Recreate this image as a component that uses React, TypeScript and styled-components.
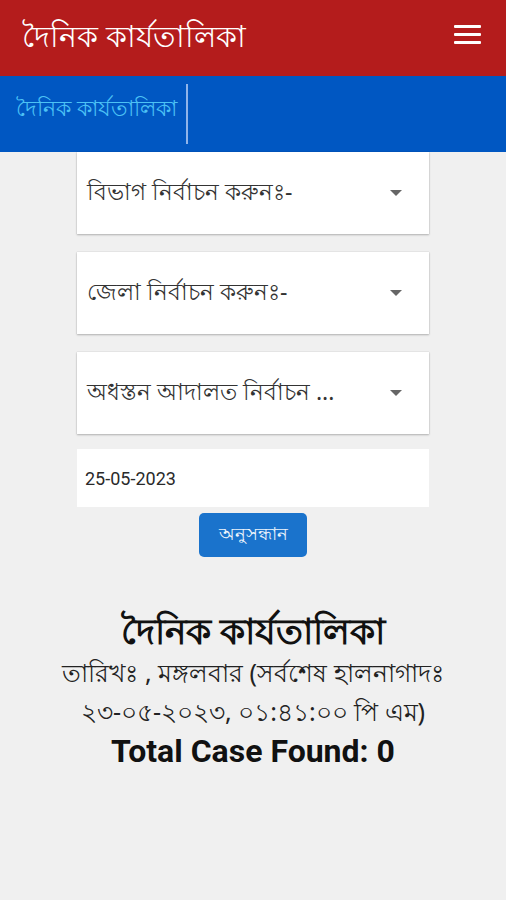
import React from 'react';
import styled, { createGlobalStyle } from 'styled-components';

const GlobalStyle = createGlobalStyle`
    html, body {
        margin: 0;
        padding: 0;
        background: #f0f0f0;
    }
    body {
        font-family: 'Noto Sans', Roboto, 'Liberation Sans', sans-serif;
    }
`;

const Page = styled.div`
    display: flex;
    flex-direction: column;
    min-height: 900px;
    background: #f0f0f0;
`;

const TopBar = styled.header`
    align-items: center;
    background: #b41c1c;
    box-sizing: border-box;
    display: flex;
    height: 76px;
    justify-content: space-between;
    padding: 0 25px 0 22px;
`;

const AppTitle = styled.h1`
    color: #ffffff;
    font-size: 30px;
    font-weight: 500;
    margin: 0;
`;

const MenuButton = styled.button`
    background: none;
    border: 0;
    cursor: pointer;
    display: flex;
    flex-direction: column;
    gap: 5px;
    padding: 0;
    margin-bottom: 8px;

    span {
        background: #ffffff;
        border-radius: 1px;
        display: block;
        height: 3px;
        width: 27px;
    }
`;

const TabBar = styled.nav`
    align-items: center;
    background: #0057c2;
    box-sizing: border-box;
    display: flex;
    height: 76px;
    padding: 0 0 0 16px;
`;

const TabItem = styled.div`
    border-right: 2px solid #8fb4ea;
    box-sizing: border-box;
    color: #4cc2f5;
    font-size: 22px;
    font-weight: 500;
    height: 60px;
    line-height: 46px;
    padding-right: 9px;
`;

const Form = styled.section`
    align-items: center;
    display: flex;
    flex-direction: column;
    gap: 18px;
`;

const Fields = styled.div`
    display: flex;
    flex-direction: column;
    gap: 18px;
    width: 352px;
`;

const SelectCard = styled.div`
    align-items: center;
    background: #ffffff;
    box-shadow: 0 1px 2px rgba(0, 0, 0, 0.25), 0 0 1px rgba(0, 0, 0, 0.2);
    box-sizing: border-box;
    color: #333333;
    display: flex;
    font-size: 23px;
    height: 82px;
    justify-content: space-between;
    padding: 0 27px 0 10px;
`;

const Caret = styled.span`
    border-left: 6px solid transparent;
    border-right: 6px solid transparent;
    border-top: 6px solid #666666;
    height: 0;
    width: 0;
`;

const DateBox = styled.div`
    align-items: center;
    background: #ffffff;
    box-sizing: border-box;
    color: #2a2a2a;
    display: flex;
    font-family: Roboto, 'Liberation Sans', sans-serif;
    font-size: 18px;
    font-weight: 400;
    height: 58px;
    margin-top: -3px;
    padding: 0 8px;
`;

const SearchButton = styled.button`
    background: #1a73cc;
    border: 0;
    border-radius: 5px;
    color: #eef5fc;
    cursor: pointer;
    font-family: 'Noto Sans', sans-serif;
    font-size: 18px;
    font-weight: 500;
    height: 44px;
    margin-top: -12px;
    padding: 0;
    width: 108px;
`;

const Summary = styled.section`
    align-items: center;
    color: #111111;
    display: flex;
    flex-direction: column;
    margin-top: 52px;
    text-align: center;
`;

const SummaryTitle = styled.h2`
    font-size: 36px;
    font-weight: 700;
    line-height: 44px;
    margin: 0;
`;

const SummaryLine = styled.p`
    color: #222222;
    font-size: 25px;
    line-height: 39px;
    margin: 0;
`;

const CaseCount = styled.p`
    font-family: Roboto, 'Liberation Sans', sans-serif;
    font-size: 32px;
    font-weight: 700;
    line-height: 40px;
    margin: 0;
`;

const selects = ['বিভাগ নির্বাচন করুনঃ-', 'জেলা নির্বাচন করুনঃ-', 'অধস্তন আদালত নির্বাচন ...'];

export default function App() {
    return (
        <Page>
            <GlobalStyle />
            <TopBar>
                <AppTitle>দৈনিক কার্যতালিকা</AppTitle>
                <MenuButton aria-label="menu">
                    <span />
                    <span />
                    <span />
                </MenuButton>
            </TopBar>
            <TabBar>
                <TabItem>দৈনিক কার্যতালিকা</TabItem>
            </TabBar>
            <Form>
                <Fields>
                    {selects.map(label => (
                        <SelectCard key={label}>
                            <span>{label}</span>
                            <Caret />
                        </SelectCard>
                    ))}
                    <DateBox>25-05-2023</DateBox>
                </Fields>
                <SearchButton>অনুসন্ধান</SearchButton>
            </Form>
            <Summary>
                <SummaryTitle>দৈনিক কার্যতালিকা</SummaryTitle>
                <SummaryLine>তারিখঃ , মঙ্গলবার (সর্বশেষ হালনাগাদঃ</SummaryLine>
                <SummaryLine>২৩-০৫-২০২৩, ০১:৪১:০০ পি এম)</SummaryLine>
                <CaseCount>Total Case Found: 0</CaseCount>
            </Summary>
        </Page>
    );
}
